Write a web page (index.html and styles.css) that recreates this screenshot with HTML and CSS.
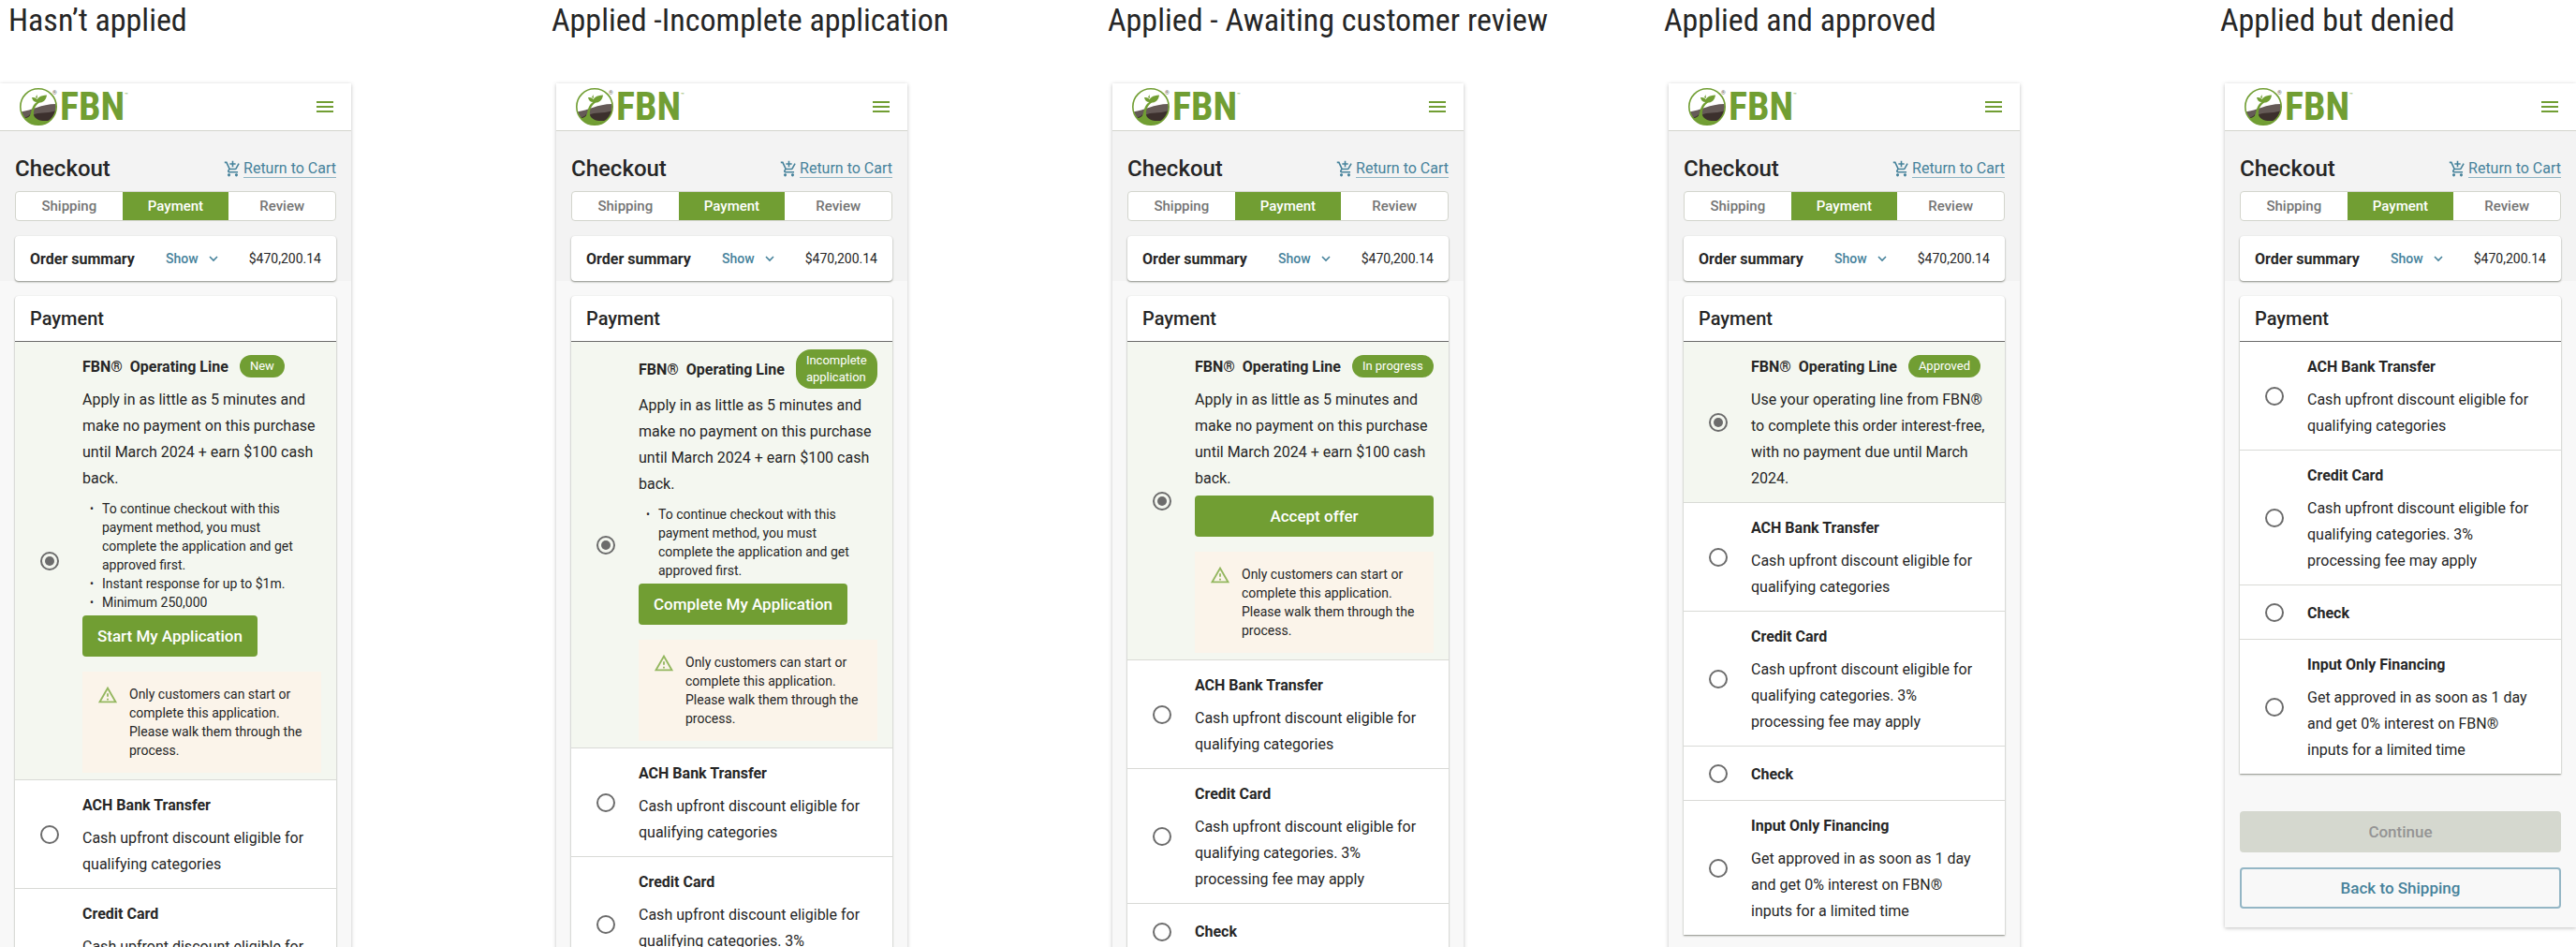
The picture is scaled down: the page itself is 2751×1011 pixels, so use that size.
FILE: index.html
```html
<!DOCTYPE html>
<html lang="en">
<head>
    <meta charset="UTF-8">
    <title>Checkout - Payment states</title>
    <link rel="stylesheet" href="styles.css">
</head>
<body>
    <svg class="sprite" aria-hidden="true">
        <symbol id="logo" viewBox="0 0 40 40">
            <clipPath id="disc"><circle cx="20" cy="20" r="19"/></clipPath>
            <circle cx="20" cy="20" r="19" fill="#fff"/>
            <g clip-path="url(#disc)">
                <path d="M0 25.500C14 24 22 17 40 17V40H0z" fill="#655a57"/>
                <path d="M0 31.500C5 32 9 31 11 28V40H0zM14 29C21 25 28 28 40 24V40H14z" fill="#3c302d"/>
                <path d="M0 31C6 33 11 32 12 27C13 22 14 17 20 14L21 15.500C16 19 14.500 24 15 29C17 35 27 37 38 33V40H0z" fill="#719e33"/>
            </g>
            <path d="M29 7.500C22 8 18 10 18 15.500C24 16.500 28 14 29 7.500zM19.500 15C19 11 17 10 13 10C13.500 13.500 16 15.500 19.500 15zM17 10L18.500 7L19 11z" fill="#719e33"/>
            <circle cx="20" cy="20" r="19.200" fill="none" stroke="#719e33" stroke-width="1.600"/>
        </symbol>
        <symbol id="menu" viewBox="0 0 24 24">
            <path d="M3 18h18v-2H3v2zm0-5h18v-2H3v2zm0-7v2h18V6H3z"/>
        </symbol>
        <symbol id="cart" viewBox="0 0 24 24">
            <path d="M11 9h2V6h3V4h-3V1h-2v3H8v2h3v3zm-4 9c-1.100 0-1.990.9-1.990 2S5.900 22 7 22s2-.9 2-2-.9-2-2-2zm10 0c-1.100 0-1.990.9-1.990 2s.89 2 1.990 2 2-.9 2-2-.9-2-2-2zm-8.900-5h7.450c.75 0 1.410-.41 1.750-1.030l3.860-7.010L19.420 4l-3.870 7H8.530L4.270 2H1v2h2l3.600 7.590-1.350 2.440C4.520 15.370 5.480 17 7 17h12v-2H7l1.100-2z"/>
        </symbol>
        <symbol id="chevron" viewBox="0 0 10 10">
            <path d="M1 3l4 4 4-4" fill="none" stroke="currentColor" stroke-width="1.600"/>
        </symbol>
        <symbol id="warning" viewBox="0 0 24 24">
            <path d="M12 5.990L19.530 19H4.470L12 5.990M12 2L1 21h22L12 2zm1 14h-2v2h2v-2zm0-6h-2v4h2v-4z"/>
        </symbol>
    </svg>

    <main class="board">
        <!-- Hasn't applied -->
        <section class="state">
            <h1 class="state-title">Hasn’t applied</h1>
            <div class="phone">
                <header class="topbar">
                    <div class="brand"><svg class="logo"><use href="#logo"/></svg><sup class="reg">®</sup><span class="wordmark">FBN</span><sup class="tm">™</sup></div>
                    <button class="menu-button" aria-label="Menu"><svg class="icon-menu"><use href="#menu"/></svg></button>
                </header>
                <div class="checkout">
                    <div class="checkout-head">
                        <h2>Checkout</h2>
                        <a class="cart-link" href="#"><svg class="icon-cart"><use href="#cart"/></svg><span>Return to Cart</span></a>
                    </div>
                    <nav class="steps">
                        <button>Shipping</button>
                        <button class="active">Payment</button>
                        <button>Review</button>
                    </nav>
                    <div class="summary">
                        <strong>Order summary</strong>
                        <button>Show <svg class="icon-chevron"><use href="#chevron"/></svg></button>
                        <span>$470,200.14</span>
                    </div>
                </div>
                <div class="content">
                    <div class="payment">
                        <h3>Payment</h3>
                        <div class="option selected">
                            <input type="radio" name="pay1" id="pay1-line" checked>
                            <div class="option-body">
                                <div class="option-head">
                                    <label for="pay1-line">FBN®&nbsp; Operating Line</label>
                                    <span class="chip">New</span>
                                </div>
                                <p>Apply in as little as 5 minutes and<br>make no payment on this purchase<br>until March 2024 + earn $100 cash<br>back.</p>
                                <ul>
                                    <li>To continue checkout with this<br>payment method, you must<br>complete the application and get<br>approved first.</li>
                                    <li>Instant response for up to $1m.</li>
                                    <li>Minimum 250,000</li>
                                </ul>
                                <button class="btn">Start My Application</button>
                                <div class="alert">
                                    <svg class="icon-warning"><use href="#warning"/></svg>
                                    <span>Only customers can start or<br>complete this application.<br>Please walk them through the<br>process.</span>
                                </div>
                            </div>
                        </div>
                        <div class="option">
                            <input type="radio" name="pay1" id="pay1-ach">
                            <div class="option-body">
                                <div class="option-head"><label for="pay1-ach">ACH Bank Transfer</label></div>
                                <p>Cash upfront discount eligible for<br>qualifying categories</p>
                            </div>
                        </div>
                        <div class="option">
                            <input type="radio" name="pay1" id="pay1-card">
                            <div class="option-body">
                                <div class="option-head"><label for="pay1-card">Credit Card</label></div>
                                <p>Cash upfront discount eligible for<br>qualifying categories. 3%<br>processing fee may apply</p>
                            </div>
                        </div>
                    </div>
                </div>
            </div>
        </section>

        <!-- Incomplete application -->
        <section class="state">
            <h1 class="state-title">Applied -Incomplete application</h1>
            <div class="phone">
                <header class="topbar">
                    <div class="brand"><svg class="logo"><use href="#logo"/></svg><sup class="reg">®</sup><span class="wordmark">FBN</span><sup class="tm">™</sup></div>
                    <button class="menu-button" aria-label="Menu"><svg class="icon-menu"><use href="#menu"/></svg></button>
                </header>
                <div class="checkout">
                    <div class="checkout-head">
                        <h2>Checkout</h2>
                        <a class="cart-link" href="#"><svg class="icon-cart"><use href="#cart"/></svg><span>Return to Cart</span></a>
                    </div>
                    <nav class="steps">
                        <button>Shipping</button>
                        <button class="active">Payment</button>
                        <button>Review</button>
                    </nav>
                    <div class="summary">
                        <strong>Order summary</strong>
                        <button>Show <svg class="icon-chevron"><use href="#chevron"/></svg></button>
                        <span>$470,200.14</span>
                    </div>
                </div>
                <div class="content">
                    <div class="payment">
                        <h3>Payment</h3>
                        <div class="option selected">
                            <input type="radio" name="pay2" id="pay2-line" checked>
                            <div class="option-body">
                                <div class="option-head">
                                    <label for="pay2-line">FBN®&nbsp; Operating Line</label>
                                    <span class="chip">Incomplete<br>application</span>
                                </div>
                                <p>Apply in as little as 5 minutes and<br>make no payment on this purchase<br>until March 2024 + earn $100 cash<br>back.</p>
                                <ul>
                                    <li>To continue checkout with this<br>payment method, you must<br>complete the application and get<br>approved first.</li>
                                </ul>
                                <button class="btn">Complete My Application</button>
                                <div class="alert">
                                    <svg class="icon-warning"><use href="#warning"/></svg>
                                    <span>Only customers can start or<br>complete this application.<br>Please walk them through the<br>process.</span>
                                </div>
                            </div>
                        </div>
                        <div class="option">
                            <input type="radio" name="pay2" id="pay2-ach">
                            <div class="option-body">
                                <div class="option-head"><label for="pay2-ach">ACH Bank Transfer</label></div>
                                <p>Cash upfront discount eligible for<br>qualifying categories</p>
                            </div>
                        </div>
                        <div class="option">
                            <input type="radio" name="pay2" id="pay2-card">
                            <div class="option-body">
                                <div class="option-head"><label for="pay2-card">Credit Card</label></div>
                                <p>Cash upfront discount eligible for<br>qualifying categories. 3%<br>processing fee may apply</p>
                            </div>
                        </div>
                    </div>
                </div>
            </div>
        </section>

        <!-- Awaiting customer review -->
        <section class="state">
            <h1 class="state-title">Applied - Awaiting customer review</h1>
            <div class="phone">
                <header class="topbar">
                    <div class="brand"><svg class="logo"><use href="#logo"/></svg><sup class="reg">®</sup><span class="wordmark">FBN</span><sup class="tm">™</sup></div>
                    <button class="menu-button" aria-label="Menu"><svg class="icon-menu"><use href="#menu"/></svg></button>
                </header>
                <div class="checkout">
                    <div class="checkout-head">
                        <h2>Checkout</h2>
                        <a class="cart-link" href="#"><svg class="icon-cart"><use href="#cart"/></svg><span>Return to Cart</span></a>
                    </div>
                    <nav class="steps">
                        <button>Shipping</button>
                        <button class="active">Payment</button>
                        <button>Review</button>
                    </nav>
                    <div class="summary">
                        <strong>Order summary</strong>
                        <button>Show <svg class="icon-chevron"><use href="#chevron"/></svg></button>
                        <span>$470,200.14</span>
                    </div>
                </div>
                <div class="content">
                    <div class="payment">
                        <h3>Payment</h3>
                        <div class="option selected">
                            <input type="radio" name="pay3" id="pay3-line" checked>
                            <div class="option-body">
                                <div class="option-head">
                                    <label for="pay3-line">FBN®&nbsp; Operating Line</label>
                                    <span class="chip">In progress</span>
                                </div>
                                <p>Apply in as little as 5 minutes and<br>make no payment on this purchase<br>until March 2024 + earn $100 cash<br>back.</p>
                                <button class="btn btn-wide">Accept offer</button>
                                <div class="alert">
                                    <svg class="icon-warning"><use href="#warning"/></svg>
                                    <span>Only customers can start or<br>complete this application.<br>Please walk them through the<br>process.</span>
                                </div>
                            </div>
                        </div>
                        <div class="option">
                            <input type="radio" name="pay3" id="pay3-ach">
                            <div class="option-body">
                                <div class="option-head"><label for="pay3-ach">ACH Bank Transfer</label></div>
                                <p>Cash upfront discount eligible for<br>qualifying categories</p>
                            </div>
                        </div>
                        <div class="option">
                            <input type="radio" name="pay3" id="pay3-card">
                            <div class="option-body">
                                <div class="option-head"><label for="pay3-card">Credit Card</label></div>
                                <p>Cash upfront discount eligible for<br>qualifying categories. 3%<br>processing fee may apply</p>
                            </div>
                        </div>
                        <div class="option">
                            <input type="radio" name="pay3" id="pay3-check">
                            <div class="option-body">
                                <div class="option-head"><label for="pay3-check">Check</label></div>
                            </div>
                        </div>
                    </div>
                </div>
            </div>
        </section>

        <!-- Approved -->
        <section class="state">
            <h1 class="state-title">Applied and approved</h1>
            <div class="phone">
                <header class="topbar">
                    <div class="brand"><svg class="logo"><use href="#logo"/></svg><sup class="reg">®</sup><span class="wordmark">FBN</span><sup class="tm">™</sup></div>
                    <button class="menu-button" aria-label="Menu"><svg class="icon-menu"><use href="#menu"/></svg></button>
                </header>
                <div class="checkout">
                    <div class="checkout-head">
                        <h2>Checkout</h2>
                        <a class="cart-link" href="#"><svg class="icon-cart"><use href="#cart"/></svg><span>Return to Cart</span></a>
                    </div>
                    <nav class="steps">
                        <button>Shipping</button>
                        <button class="active">Payment</button>
                        <button>Review</button>
                    </nav>
                    <div class="summary">
                        <strong>Order summary</strong>
                        <button>Show <svg class="icon-chevron"><use href="#chevron"/></svg></button>
                        <span>$470,200.14</span>
                    </div>
                </div>
                <div class="content">
                    <div class="payment">
                        <h3>Payment</h3>
                        <div class="option selected">
                            <input type="radio" name="pay4" id="pay4-line" checked>
                            <div class="option-body">
                                <div class="option-head">
                                    <label for="pay4-line">FBN®&nbsp; Operating Line</label>
                                    <span class="chip">Approved</span>
                                </div>
                                <p>Use your operating line from FBN®<br>to complete this order interest-free,<br>with no payment due until March<br>2024.</p>
                            </div>
                        </div>
                        <div class="option">
                            <input type="radio" name="pay4" id="pay4-ach">
                            <div class="option-body">
                                <div class="option-head"><label for="pay4-ach">ACH Bank Transfer</label></div>
                                <p>Cash upfront discount eligible for<br>qualifying categories</p>
                            </div>
                        </div>
                        <div class="option">
                            <input type="radio" name="pay4" id="pay4-card">
                            <div class="option-body">
                                <div class="option-head"><label for="pay4-card">Credit Card</label></div>
                                <p>Cash upfront discount eligible for<br>qualifying categories. 3%<br>processing fee may apply</p>
                            </div>
                        </div>
                        <div class="option">
                            <input type="radio" name="pay4" id="pay4-check">
                            <div class="option-body">
                                <div class="option-head"><label for="pay4-check">Check</label></div>
                            </div>
                        </div>
                        <div class="option">
                            <input type="radio" name="pay4" id="pay4-input">
                            <div class="option-body">
                                <div class="option-head"><label for="pay4-input">Input Only Financing</label></div>
                                <p>Get approved in as soon as 1 day<br>and get 0% interest on FBN®<br>inputs for a limited time</p>
                            </div>
                        </div>
                    </div>
                    <div class="actions">
                        <button class="btn">Continue</button>
                        <button class="btn btn-outline">Back to Shipping</button>
                    </div>
                </div>
            </div>
        </section>

        <!-- Denied -->
        <section class="state">
            <h1 class="state-title">Applied but denied</h1>
            <div class="phone">
                <header class="topbar">
                    <div class="brand"><svg class="logo"><use href="#logo"/></svg><sup class="reg">®</sup><span class="wordmark">FBN</span><sup class="tm">™</sup></div>
                    <button class="menu-button" aria-label="Menu"><svg class="icon-menu"><use href="#menu"/></svg></button>
                </header>
                <div class="checkout">
                    <div class="checkout-head">
                        <h2>Checkout</h2>
                        <a class="cart-link" href="#"><svg class="icon-cart"><use href="#cart"/></svg><span>Return to Cart</span></a>
                    </div>
                    <nav class="steps">
                        <button>Shipping</button>
                        <button class="active">Payment</button>
                        <button>Review</button>
                    </nav>
                    <div class="summary">
                        <strong>Order summary</strong>
                        <button>Show <svg class="icon-chevron"><use href="#chevron"/></svg></button>
                        <span>$470,200.14</span>
                    </div>
                </div>
                <div class="content">
                    <div class="payment">
                        <h3>Payment</h3>
                        <div class="option">
                            <input type="radio" name="pay5" id="pay5-ach">
                            <div class="option-body">
                                <div class="option-head"><label for="pay5-ach">ACH Bank Transfer</label></div>
                                <p>Cash upfront discount eligible for<br>qualifying categories</p>
                            </div>
                        </div>
                        <div class="option">
                            <input type="radio" name="pay5" id="pay5-card">
                            <div class="option-body">
                                <div class="option-head"><label for="pay5-card">Credit Card</label></div>
                                <p>Cash upfront discount eligible for<br>qualifying categories. 3%<br>processing fee may apply</p>
                            </div>
                        </div>
                        <div class="option">
                            <input type="radio" name="pay5" id="pay5-check">
                            <div class="option-body">
                                <div class="option-head"><label for="pay5-check">Check</label></div>
                            </div>
                        </div>
                        <div class="option">
                            <input type="radio" name="pay5" id="pay5-input">
                            <div class="option-body">
                                <div class="option-head"><label for="pay5-input">Input Only Financing</label></div>
                                <p>Get approved in as soon as 1 day<br>and get 0% interest on FBN®<br>inputs for a limited time</p>
                            </div>
                        </div>
                    </div>
                    <div class="actions">
                        <button class="btn" disabled>Continue</button>
                        <button class="btn btn-outline">Back to Shipping</button>
                    </div>
                </div>
            </div>
        </section>
    </main>
</body>
</html>
```
FILE: styles.css
```css
* {
    box-sizing: border-box;
}
body {
    margin: 0;
    height: 100vh;
    overflow: hidden;
    background: #fff;
    color: #262626;
    font-family: Roboto, "Liberation Sans", sans-serif;
    font-size: 16px;
}
h1, h2, h3, p, ul {
    margin: 0;
}
button {
    padding: 0;
    border: 0;
    background: none;
    font-family: inherit;
    cursor: pointer;
}
svg {
    display: block;
    fill: currentColor;
}
.sprite {
    position: absolute;
    width: 0;
    height: 0;
}

/* board */
.board {
    display: flex;
    justify-content: space-between;
}
.state {
    width: 375px;
    flex: none;
}
.state-title {
    height: 89px;
    margin-left: -5px;
    font-family: "Roboto Condensed", Roboto, sans-serif;
    font-size: 34px;
    font-weight: 400;
    line-height: 42px;
    white-space: nowrap;
}
.state:first-child .state-title {
    margin-left: 9px;
}
.phone {
    background: #f8f8f8;
    box-shadow: 0 1px 4px rgba(0,0,0,0.25);
}

/* top bar */
.topbar {
    display: flex;
    align-items: center;
    justify-content: space-between;
    height: 51px;
    padding: 0 16px 0 21px;
    background: #fff;
    border-bottom: 1px solid #d3d5cd;
    color: #719e33;
}
.brand {
    display: flex;
    align-items: flex-start;
    height: 40px;
}
.logo {
    width: 40px;
    height: 40px;
}
.reg, .tm {
    width: 5px;
    font-size: 6px;
    line-height: 10px;
}
.reg {
    margin-left: -5px;
    color: #655a57;
}
.tm {
    padding-top: 2px;
}
.wordmark {
    margin-left: 3px;
    font-family: "Roboto Condensed", Roboto, sans-serif;
    font-size: 42px;
    font-weight: 700;
    line-height: 40px;
}
.menu-button {
    color: #719e33;
}
.icon-menu {
    width: 24px;
    height: 24px;
}

/* checkout block */
.checkout {
    height: 160px;
    padding: 24px 16px 0;
    background: #f3f3f3;
}
.checkout-head {
    display: flex;
    align-items: center;
    justify-content: space-between;
    height: 32px;
    margin-bottom: 8px;
}
.checkout-head h2 {
    font-size: 24px;
    font-weight: 500;
    line-height: 32px;
}
.cart-link {
    display: flex;
    align-items: center;
    gap: 2px;
    color: #46829b;
    text-decoration: none;
}
.cart-link span {
    line-height: 18px;
    border-bottom: 1px solid #8fb4c3;
}
.icon-cart {
    width: 19px;
    height: 19px;
}
.steps {
    display: grid;
    grid-template-columns: repeat(3, 1fr);
    height: 32px;
    margin-bottom: 16px;
    overflow: hidden;
    background: #fff;
    border: 1px solid #d3d5cd;
    border-radius: 4px;
}
.steps button {
    color: #757575;
    font-size: 15px;
    font-weight: 500;
}
.steps .active {
    background: #719e33;
    color: #fff;
}
.summary {
    display: flex;
    align-items: center;
    justify-content: space-between;
    height: 48px;
    padding: 0 16px;
    background: #fff;
    border-radius: 4px;
    box-shadow: 0 1px 2px rgba(60,65,50,0.6);
}
.summary button {
    display: flex;
    align-items: center;
    gap: 11px;
    color: #46829b;
    font-size: 14px;
    font-weight: 500;
}
.summary span {
    font-size: 14px;
    text-align: right;
}
.icon-chevron {
    width: 10px;
    height: 10px;
}

/* payment card */
.content {
    padding: 16px 16px 20px;
}
.payment {
    background: #fff;
    border-radius: 4px 4px 0 0;
    box-shadow: 0 1px 2px rgba(60,65,50,0.6);
}
.payment h3 {
    height: 49px;
    padding: 0 16px;
    border-bottom: 1px solid #6c6c6c;
    font-size: 20px;
    font-weight: 500;
    line-height: 48px;
}
.option {
    display: flex;
    align-items: center;
    gap: 25px;
    min-height: 58px;
    padding: 8px 0 7px 27px;
    border-bottom: 1px solid #d9dad6;
}
.option:last-child {
    border-bottom: 0;
}
.option.selected {
    background: #f4f7f0;
}
.option input {
    flex: none;
    display: grid;
    place-content: center;
    width: 20px;
    height: 20px;
    margin: 0;
    appearance: none;
    border: 2px solid #6c6c6c;
    border-radius: 50%;
}
.option input:checked::before {
    content: "";
    width: 10px;
    height: 10px;
    border-radius: 50%;
    background: #6c6c6c;
}
.option-body {
    flex: 1;
    display: flex;
    flex-direction: column;
    align-items: flex-start;
}
.option-head {
    display: flex;
    align-items: center;
    gap: 12px;
    min-height: 36px;
    font-weight: 700;
    white-space: nowrap;
}
.chip {
    padding: 3px 11px;
    background: #719e33;
    border-radius: 16px;
    color: #fff;
    font-size: 13px;
    font-weight: 400;
    line-height: 18px;
}
.option p {
    margin: 4px 0;
    line-height: 28px;
    white-space: nowrap;
}
.option ul {
    margin: 4px 0;
    padding-left: 21px;
    font-size: 14px;
    line-height: 20px;
    list-style: none;
}
.option li::before {
    content: "•";
    float: left;
    margin-left: -13px;
    font-size: 12px;
}
.btn {
    height: 44px;
    padding: 0 16px;
    background: #719e33;
    border-radius: 4px;
    color: #fff;
    font-size: 17px;
    font-weight: 500;
}
.btn-wide {
    width: 255px;
}
.btn:disabled {
    background: #d5d8cf;
    color: #949494;
}
.btn-outline {
    background: none;
    border: 2px solid #94b6c5;
    color: #46829b;
}
.alert {
    display: flex;
    gap: 12px;
    width: 255px;
    margin-top: 16px;
    padding: 14px 16px;
    background: #fbf4ea;
    font-size: 14px;
    line-height: 20px;
    white-space: nowrap;
}
.icon-warning {
    flex: none;
    width: 22px;
    height: 22px;
    color: #94b75f;
}
.actions {
    display: flex;
    flex-direction: column;
    gap: 16px;
    padding-top: 40px;
}
```
